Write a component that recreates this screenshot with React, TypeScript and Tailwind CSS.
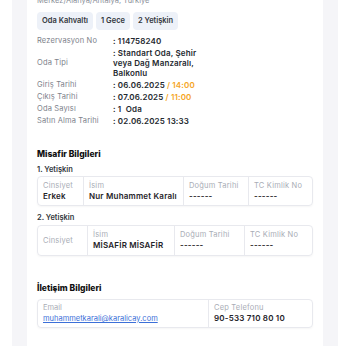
const details = [
  { label: "Rezervasyon No", value: <>: 114758240</> },
  { label: "Oda Tipi", value: <>: Standart Oda, Şehir<br />veya Dağ Manzaralı,<br />Balkonlu</> },
  { label: "Giriş Tarihi", value: <>: 06.06.2025 <span className="text-[#f5a524]">/ 14:00</span></> },
  { label: "Çıkış Tarihi", value: <>: 07.06.2025 <span className="text-[#f5a524]">/ 11:00</span></> },
  { label: "Oda Sayısı", value: <>: 1 &nbsp;Oda</> },
  { label: "Satın Alma Tarihi", value: <>: 02.06.2025 13:33</> },
];

type Cell = { label: string; value?: string; w: string };

const guests: { title: string; h: string; gap: string; cells: Cell[] }[] = [
  {
    title: "1. Yetişkin",
    h: "h-[30px]",
    gap: "mt-[4px] mb-[1px]",
    cells: [
      { label: "Cinsiyet", value: "Erkek", w: "w-[45px]" },
      { label: "İsim", value: "Nur Muhammet Karalı", w: "w-[100px]" },
      { label: "Doğum Tarihi", value: "------", w: "w-[65px]" },
      { label: "TC Kimlik No", value: "------", w: "flex-1" },
    ],
  },
  {
    title: "2. Yetişkin",
    h: "h-[31px]",
    gap: "mt-[6px] mb-[2px]",
    cells: [
      { label: "Cinsiyet", w: "w-[49px]" },
      { label: "İsim", value: "MİSAFİR MİSAFİR", w: "w-[87px]" },
      { label: "Doğum Tarihi", value: "------", w: "w-[70px]" },
      { label: "TC Kimlik No", value: "------", w: "flex-1" },
    ],
  },
];

function InfoBox({ cells }: { cells: Cell[] }) {
  return (
    <div className="flex h-full rounded-[4px] border border-[#e8e9ee] shadow-[0_1px_2px_rgba(0,0,0,0.04)]">
      {cells.map((c, i) => (
        <div
          key={c.label}
          className={`${c.w} flex flex-col justify-center px-[5px] ${i > 0 ? "border-l border-[#e8e9ee]" : ""}`}
        >
          <div className="text-[7.5px] leading-[10px] tracking-[0.2px] text-[#a9adb6]">{c.label}</div>
          {c.value && <div className="text-[8px] leading-[11px] tracking-[0.2px] font-semibold text-[#1f2329]">{c.value}</div>}
        </div>
      ))}
    </div>
  );
}

export default function App() {
  return (
    <div className="h-[350px] overflow-hidden bg-white px-3" style={{ fontFamily: "Inter, 'Noto Sans', sans-serif" }}>
      <div className="h-full bg-[#f5f5f8] px-[15px]">
        <div className="-mt-[4px] bg-white px-[10px] text-[#1f2329]">
          <div className="text-[7.5px] leading-[10px] text-[#8b9099]">Merkez/Alanya/Antalya, Türkiye</div>

          <div className="mt-[6px] flex gap-[3px]">
            {["Oda Kahvaltı", "1 Gece", "2 Yetişkin"].map((t) => (
              <span key={t} className="rounded-[4px] bg-[#edf1f8] px-[5px] py-[4px] text-[7.5px] leading-[10px] font-semibold text-[#33373d]">
                {t}
              </span>
            ))}
          </div>

          <div className="mt-[6px] flex flex-col gap-[2px]">
            {details.map((d) => (
              <div key={d.label} className="flex items-center text-[7.5px] leading-[10px] tracking-[0.15px]">
                <div className="w-[76px] shrink-0 text-[#7d828b]">{d.label}</div>
                <div className="text-[8px] font-semibold text-[#25292f]">{d.value}</div>
              </div>
            ))}
          </div>

          <div className="mt-[22px] text-[8.5px] leading-[12px] font-extrabold text-[#111]">Misafir Bilgileri</div>

          {guests.map((g) => (
            <div key={g.title}>
              <div className={`${g.gap} text-[7.5px] leading-[11px] font-semibold text-[#33373d]`}>{g.title}</div>
              <div className={g.h}>
                <InfoBox cells={g.cells} />
              </div>
            </div>
          ))}

          <div className="mt-[26px] text-[8.5px] leading-[12px] font-extrabold text-[#111]">İletişim Bilgileri</div>
          <div className="mt-[5px] flex h-[29px] rounded-[4px] border border-[#e8e9ee] shadow-[0_1px_2px_rgba(0,0,0,0.04)]">
            <div className="flex w-[170px] flex-col justify-center px-[5px]">
              <div className="text-[7.5px] leading-[10px] text-[#a9adb6]">Email</div>
              <div className="text-[7.5px] leading-[11px] text-[#3b6fd8] underline">muhammetkarali@karalicay.com</div>
            </div>
            <div className="flex flex-1 flex-col justify-center border-l border-[#e8e9ee] px-[5px]">
              <div className="text-[7.5px] leading-[10px] tracking-[0.2px] text-[#a9adb6]">Cep Telefonu</div>
              <div className="text-[8px] leading-[11px] tracking-[0.2px] font-semibold text-[#1f2329]">90-533 710 80 10</div>
            </div>
          </div>
          <div className="h-[40px]" />
        </div>
      </div>
    </div>
  );
}
